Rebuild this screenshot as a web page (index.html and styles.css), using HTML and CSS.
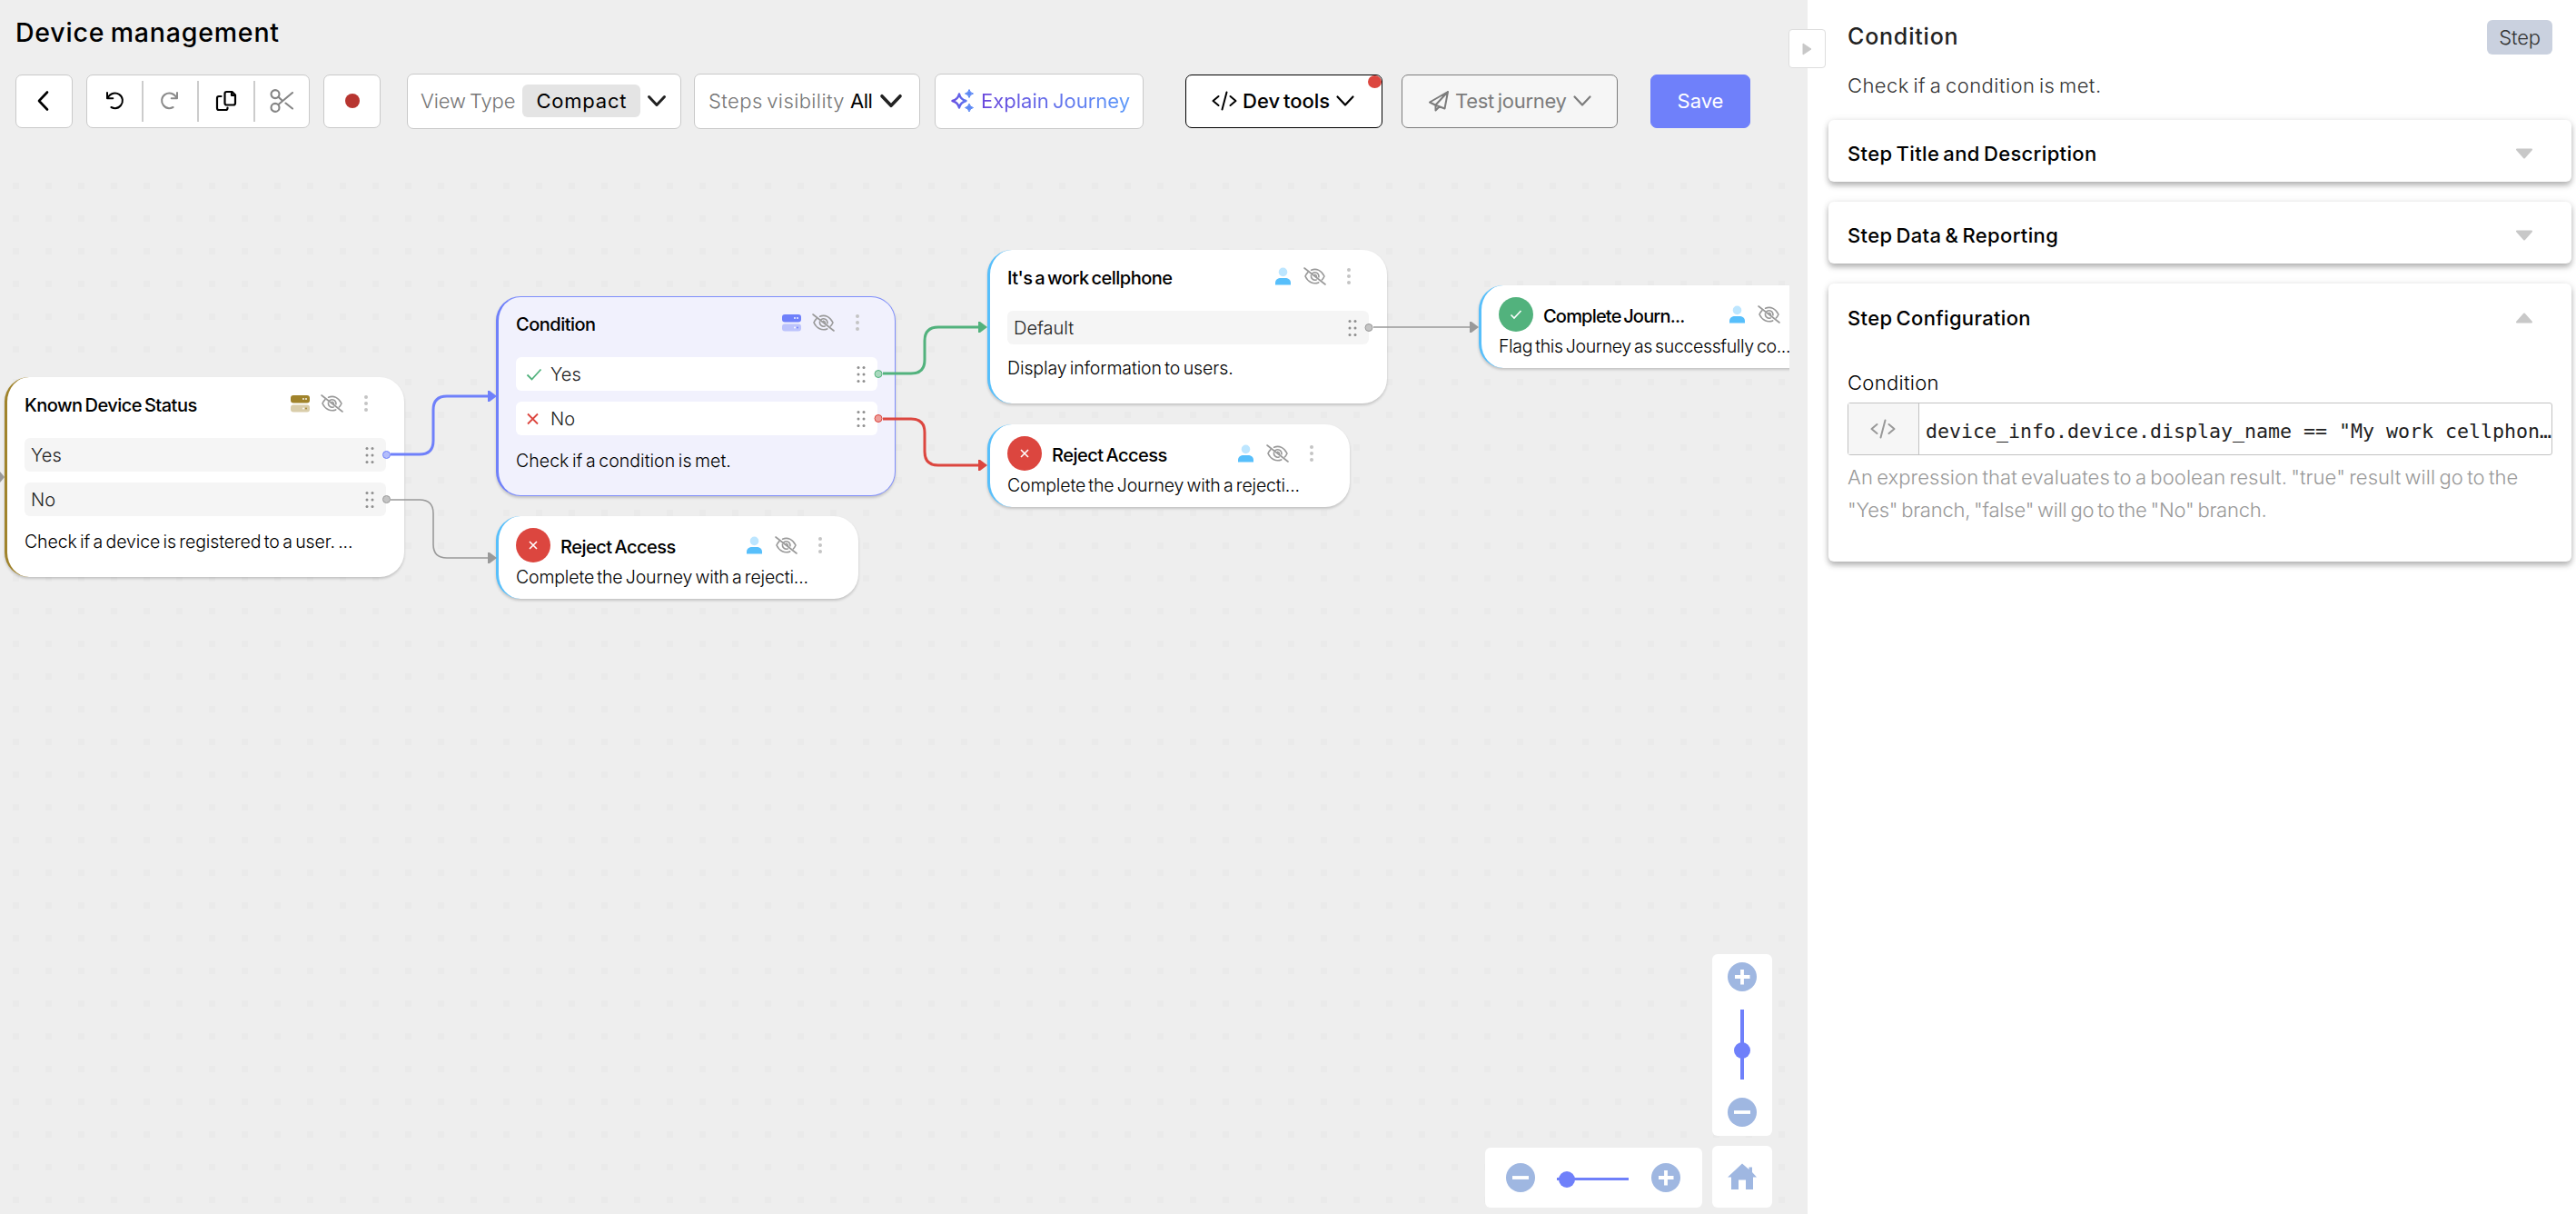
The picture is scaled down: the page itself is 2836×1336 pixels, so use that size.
FILE: index.html
```
<!DOCTYPE html>
<html lang="en">
<head>
    <meta charset="utf-8">
    <title>Device management</title>
    <link rel="stylesheet" href="styles.css">
</head>
<body>
    <!-- icon sprite -->
    <svg class="sprite">
        <symbol id="i-server" viewBox="0 0 21 20">
            <rect y="1" width="21" height="8.500" rx="3" fill="currentColor"/>
            <rect y="11.500" width="21" height="8" rx="3" fill="currentColor" opacity=".4"/>
            <circle cx="14" cy="5" r=".9" fill="#fff"/><circle cx="17" cy="5" r=".9" fill="#fff"/>
            <circle cx="14" cy="15.500" r=".9" fill="#fff"/><circle cx="17" cy="15.500" r=".9" fill="currentColor"/>
        </symbol>
        <symbol id="i-person" viewBox="0 0 21 20">
            <circle cx="10.5" cy="5.4" r="4.8" fill="#bde6ff"/>
            <path d="M2 19.5V17.5C2 13.5 5 12 8 12H13C16 12 19 13.5 19 17.5V19.5Z" fill="#57bffb"/>
        </symbol>
        <symbol id="i-eye" viewBox="0 0 25 20">
            <g fill="none" stroke="#999" stroke-width="1.6" stroke-linecap="round">
                <path d="M1 1L24 19"/>
                <path d="M8.6 3.2C14.5 .8 20 3.8 23 10C22.3 11.6 21.4 12.9 20.3 14M5 5.7C3.6 7 2.6 8.5 2 10C5 16.5 11 19.3 16.7 16.9"/>
                <path d="M10 6.6C13.4 4.3 17.4 7 16.9 10.9M8.4 9C8 12.6 11 15 14.1 13.9"/>
                <path d="M12.6 8.2C14 8.6 14.6 9.4 14.5 10.4"/>
            </g>
        </symbol>
        <symbol id="i-dots" viewBox="0 0 4 20">
            <g fill="#c4c4c4"><circle cx="2" cy="3" r="2"/><circle cx="2" cy="10" r="2"/><circle cx="2" cy="17" r="2"/></g>
        </symbol>
        <symbol id="i-drag" viewBox="0 0 10 20">
            <g fill="#8f8f8f"><circle cx="2" cy="2.6" r="1.5"/><circle cx="8" cy="2.6" r="1.5"/><circle cx="2" cy="10" r="1.5"/><circle cx="8" cy="10" r="1.5"/><circle cx="2" cy="17.4" r="1.5"/><circle cx="8" cy="17.4" r="1.5"/></g>
        </symbol>
        <symbol id="i-chevron" viewBox="0 0 22 22">
            <path d="M2.5 6.5L11 15.5L19.5 6.5" fill="none" stroke="currentColor" stroke-linecap="round" stroke-linejoin="round"/>
        </symbol>
        <symbol id="i-code" viewBox="0 0 28 22">
            <path d="M7.5 6L1.5 11L7.5 16M20.5 6L26.5 11L20.5 16M16.500 1.500L11.500 20.500" fill="none" stroke="currentColor" stroke-width="2" stroke-linecap="round" stroke-linejoin="round"/>
        </symbol>
        <symbol id="i-plus" viewBox="0 0 32 32">
            <circle cx="16" cy="16" r="16" fill="#9fb7e1"/>
            <path d="M8 16H24.5M16 8V24.5" stroke="#fff" stroke-width="3.8"/>
        </symbol>
        <symbol id="i-minus" viewBox="0 0 32 32">
            <circle cx="16" cy="16" r="16" fill="#9fb7e1"/>
            <path d="M7 16H25" stroke="#fff" stroke-width="3.8"/>
        </symbol>
    </svg>

    <div class="app">
        <main class="editor">
            <header class="header">
                <h1 class="page-title">Device management</h1>
                <div class="toolbar">
                    <button class="btn btn-icon btn-back">
                        <svg width="24" height="24" viewBox="0 0 24 24"><path d="M16 2.5L7 12L16 21.5" fill="none" stroke="#000" stroke-width="2.6" stroke-linecap="round" stroke-linejoin="round"/></svg>
                    </button>
                    <div class="btn btn-group">
                        <span class="tool">
                            <svg width="24" height="24" viewBox="0 0 24 24" fill="none" stroke="#000" stroke-width="2" stroke-linecap="round" stroke-linejoin="round"><path d="M4 3V9.300H10.300M4.300 9C7.500 2.800 13.600 2.400 17.200 4.800C21.500 7.700 22 13.500 19 17C16.300 20.200 12 20.800 8.400 19"/></svg>
                        </span>
                        <span class="tool">
                            <svg width="24" height="24" viewBox="0 0 24 24" fill="none" stroke="#8a8a8a" stroke-width="2" stroke-linecap="round" stroke-linejoin="round"><path d="M20 3V9.300H13.700M19.700 9C16.500 2.800 10.400 2.400 6.800 4.800C2.500 7.700 2 13.500 5 17C7.700 20.200 12 20.800 15.600 19"/></svg>
                        </span>
                        <span class="tool">
                            <svg width="24" height="24" viewBox="0 0 24 24" fill="none" stroke="#000" stroke-width="2.2" stroke-linecap="round" stroke-linejoin="round"><path d="M12.500 2H18.500L22 5.500V14.500Q22 16.500 20 16.500H12.500Q10.500 16.500 10.500 14.500V4Q10.500 2 12.500 2ZM18 2V6H22M6.500 7H4Q2 7 2 9V20Q2 22 4 22H11.500Q13.500 22 13.500 20V19.500"/></svg>
                        </span>
                        <span class="tool">
                            <svg width="26" height="26" viewBox="0 0 26 26" fill="none" stroke="#858585" stroke-width="2.1" stroke-linecap="round"><circle cx="6" cy="5.6" r="4.5"/><circle cx="6" cy="20.400" r="4.5"/><path d="M9.500 8.800L13 12M9.500 17L25 4M17.500 15.500L25 21.500"/></svg>
                        </span>
                    </div>
                    <button class="btn btn-icon"><i class="record-dot"></i></button>
                    <div class="btn btn-select view-type">
                        <span class="select-label">View Type</span>
                        <span class="pill">Compact</span>
                        <svg class="chev chev-bold" width="22" height="22"><use href="#i-chevron"/></svg>
                    </div>
                    <div class="btn btn-select steps">
                        <span class="select-label">Steps visibility</span>
                        <span class="select-value">All</span>
                        <svg class="chev chev-bold" width="26" height="26"><use href="#i-chevron"/></svg>
                    </div>
                    <button class="btn explain">
                        <svg width="26" height="26" viewBox="0 0 26 26">
                            <defs><linearGradient id="spark" x1="0" x2="1"><stop offset="0" stop-color="#6a4fe0"/><stop offset="1" stop-color="#5b75f0"/></linearGradient></defs>
                            <path d="M10 5.500Q11.500 11.500 17.500 13Q11.500 14.500 10 20.500Q8.500 14.500 2.500 13Q8.500 11.500 10 5.500Z" fill="none" stroke="url(#spark)" stroke-width="2.4" stroke-linejoin="round"/>
                            <path d="M21 .5Q21.800 4.200 25.500 5Q21.800 5.800 21 9.500Q20.200 5.800 16.500 5Q20.200 4.200 21 .5ZM21 16Q21.800 19.700 25.500 20.500Q21.800 21.300 21 25Q20.200 21.300 16.500 20.500Q20.200 19.700 21 16Z" fill="#5e8af5" stroke="#5e8af5" stroke-width="1"/>
                        </svg>
                        <span class="explain-label">Explain Journey</span>
                    </button>
                    <button class="btn dev-tools">
                        <svg width="28" height="22"><use href="#i-code"/></svg>
                        <span>Dev tools</span>
                        <svg class="chev" width="22" height="22"><use href="#i-chevron"/></svg>
                        <i class="badge"></i>
                    </button>
                    <button class="btn test-journey">
                        <svg width="24" height="24" viewBox="0 0 24 24" fill="none" stroke="currentColor" stroke-width="2" stroke-linejoin="round" stroke-linecap="round"><path d="M22 2L2 13.500L8 16.500L18.500 20.500ZM22 2L8.500 16.500V22.500L12.500 18.500"/></svg>
                        <span>Test journey</span>
                        <svg class="chev" width="22" height="22"><use href="#i-chevron"/></svg>
                    </button>
                    <button class="btn save">Save</button>
                </div>
            </header>

            <section class="canvas">
                <article class="node known">
                    <div class="node-head">
                        <h3 class="node-title">Known Device Status</h3>
                        <svg class="type" width="21" height="20"><use href="#i-server"/></svg>
                        <svg class="eye" width="25" height="20"><use href="#i-eye"/></svg>
                        <svg class="dots" width="4" height="20"><use href="#i-dots"/></svg>
                    </div>
                    <div class="outcomes">
                        <div class="outcome"><span>Yes</span><svg width="10" height="20"><use href="#i-drag"/></svg></div>
                        <div class="outcome"><span>No</span><svg width="10" height="20"><use href="#i-drag"/></svg></div>
                    </div>
                    <p class="node-text">Check if a device is registered to a user. ...</p>
                </article>

                <article class="node condition">
                    <div class="node-head">
                        <h3 class="node-title">Condition</h3>
                        <svg class="type" width="21" height="20"><use href="#i-server"/></svg>
                        <svg class="eye" width="25" height="20"><use href="#i-eye"/></svg>
                        <svg class="dots" width="4" height="20"><use href="#i-dots"/></svg>
                    </div>
                    <div class="outcomes">
                        <div class="outcome">
                            <svg class="mark" width="18" height="16" viewBox="0 0 18 16"><path d="M1.500 8.500L6.500 13.500L16.500 2.500" fill="none" stroke="#52b27d" stroke-width="1.8"/></svg>
                            <span>Yes</span><svg width="10" height="20"><use href="#i-drag"/></svg>
                        </div>
                        <div class="outcome">
                            <svg class="mark" width="18" height="16" viewBox="0 0 18 16"><path d="M2 2.500L13 13.500M13 2.500L2 13.500" fill="none" stroke="#dc463f" stroke-width="1.8"/></svg>
                            <span>No</span><svg width="10" height="20"><use href="#i-drag"/></svg>
                        </div>
                    </div>
                    <p class="node-text">Check if a condition is met.</p>
                </article>

                <article class="node compact reject-known">
                    <div class="node-head">
                        <i class="status status-bad"><svg width="12" height="12" viewBox="0 0 12 12"><path d="M2 2L10 10M10 2L2 10" stroke="#fff" stroke-width="1.6"/></svg></i>
                        <h3 class="node-title">Reject Access</h3>
                        <svg class="type" width="21" height="20"><use href="#i-person"/></svg>
                        <svg class="eye" width="25" height="20"><use href="#i-eye"/></svg>
                        <svg class="dots" width="4" height="20"><use href="#i-dots"/></svg>
                    </div>
                    <p class="node-text">Complete the Journey with a rejecti...</p>
                </article>

                <article class="node work">
                    <div class="node-head">
                        <h3 class="node-title">It's a work cellphone</h3>
                        <svg class="type" width="21" height="20"><use href="#i-person"/></svg>
                        <svg class="eye" width="25" height="20"><use href="#i-eye"/></svg>
                        <svg class="dots" width="4" height="20"><use href="#i-dots"/></svg>
                    </div>
                    <div class="outcomes">
                        <div class="outcome"><span>Default</span><svg width="10" height="20"><use href="#i-drag"/></svg></div>
                    </div>
                    <p class="node-text">Display information to users.</p>
                </article>

                <article class="node compact reject-condition">
                    <div class="node-head">
                        <i class="status status-bad"><svg width="12" height="12" viewBox="0 0 12 12"><path d="M2 2L10 10M10 2L2 10" stroke="#fff" stroke-width="1.6"/></svg></i>
                        <h3 class="node-title">Reject Access</h3>
                        <svg class="type" width="21" height="20"><use href="#i-person"/></svg>
                        <svg class="eye" width="25" height="20"><use href="#i-eye"/></svg>
                        <svg class="dots" width="4" height="20"><use href="#i-dots"/></svg>
                    </div>
                    <p class="node-text">Complete the Journey with a rejecti...</p>
                </article>

                <article class="node compact complete">
                    <div class="node-head">
                        <i class="status status-ok"><svg width="14" height="12" viewBox="0 0 14 12"><path d="M1.500 6.500L5 10L12.500 2" fill="none" stroke="#fff" stroke-width="1.6"/></svg></i>
                        <h3 class="node-title">Complete Journ...</h3>
                        <svg class="type" width="21" height="20"><use href="#i-person"/></svg>
                        <svg class="eye" width="25" height="20"><use href="#i-eye"/></svg>
                        <svg class="dots" width="4" height="20"><use href="#i-dots"/></svg>
                    </div>
                    <p class="node-text">Flag this Journey as successfully co...</p>
                </article>

                <!-- connections between steps -->
                <svg class="edges" width="1970" height="1149" viewBox="0 187 1970 1149" fill="none">
                    <path d="M0 519L5 525L0 531Z" fill="#999"/>
                    <g stroke="#999" stroke-width="1.6">
                        <path d="M430 550H462Q477 550 477 565V599Q477 614 492 614H540"/>
                        <path d="M1512 360H1620"/>
                    </g>
                    <path d="M430 500H462Q477 500 477 485V451Q477 436 492 436H540" stroke="#6f80fa" stroke-width="3"/>
                    <path d="M972 411H1003Q1018 411 1018 396V375Q1018 360 1033 360H1080" stroke="#52b27d" stroke-width="3"/>
                    <path d="M972 461H1003Q1018 461 1018 476V497Q1018 512 1033 512H1080" stroke="#dc463f" stroke-width="3"/>
                    <path d="M537 430H539L547 436L539 442H537Z" fill="#6f80fa"/>
                    <path d="M537 608H539L547 614L539 620H537Z" fill="#999"/>
                    <path d="M1077 354H1079L1087 360L1079 366H1077Z" fill="#52b27d"/>
                    <path d="M1077 506H1079L1087 512L1079 518H1077Z" fill="#dc463f"/>
                    <path d="M1618 354H1620L1628 360L1620 366H1618Z" fill="#999"/>
                    <circle cx="425.5" cy="500.5" r="4" fill="#b3bdfb" stroke="#6f80fa"/>
                    <circle cx="425.5" cy="549.5" r="4" fill="#c4c4c4" stroke="#999"/>
                    <circle cx="967" cy="411.5" r="4" fill="#a9d9be" stroke="#52b27d"/>
                    <circle cx="967" cy="460.5" r="4" fill="#ee9f9b" stroke="#dc463f"/>
                    <circle cx="1507" cy="360.5" r="4" fill="#c4c4c4" stroke="#999"/>
                </svg>

                <div class="controls">
                    <div class="panel zoom-h">
                        <svg width="32" height="32"><use href="#i-minus"/></svg>
                        <div class="slider slider-h"><i class="thumb"></i></div>
                        <svg width="32" height="32"><use href="#i-plus"/></svg>
                    </div>
                    <div class="controls-col">
                        <div class="panel zoom-v">
                            <svg width="32" height="32"><use href="#i-plus"/></svg>
                            <div class="slider slider-v"><i class="thumb"></i></div>
                            <svg width="32" height="32"><use href="#i-minus"/></svg>
                        </div>
                        <div class="panel home">
                            <svg width="32" height="30" viewBox="0 0 32 30"><path d="M16 .5L23.500 7V4.500H27V10L32 15.500H28V29H20V18.500H12V29H4V15.500H0Z" fill="#9fb7e1"/></svg>
                        </div>
                    </div>
                </div>
            </section>
        </main>

        <aside class="sidebar">
            <button class="collapse"><svg width="12" height="16" viewBox="0 0 12 16"><path d="M1 2V14L10 8Z" fill="#c8c8c8" stroke="#c8c8c8" stroke-linejoin="round"/></svg></button>
            <div class="side-head">
                <h2 class="side-title">Condition</h2>
                <span class="tag">Step</span>
            </div>
            <p class="side-text">Check if a condition is met.</p>

            <div class="card">
                <div class="card-head">Step Title and Description<svg class="caret" width="20" height="12" viewBox="0 0 20 12"><path d="M2 1.500H18L10 10.500Z"/></svg></div>
            </div>
            <div class="card">
                <div class="card-head">Step Data &amp; Reporting<svg class="caret" width="20" height="12" viewBox="0 0 20 12"><path d="M2 1.500H18L10 10.500Z"/></svg></div>
            </div>
            <div class="card card-open">
                <div class="card-head">Step Configuration<svg class="caret" width="20" height="12" viewBox="0 0 20 12"><path d="M2 10.500H18L10 1.500Z"/></svg></div>
                <div class="field">
                    <label class="field-label">Condition</label>
                    <div class="field-box">
                        <span class="field-icon"><svg width="28" height="22"><use href="#i-code"/></svg></span>
                        <span class="field-value">device_info.device.display_name == "My work cellphon…</span>
                    </div>
                    <p class="field-help">An expression that evaluates to a boolean result. "true" result will go to the<br><span class="help-branches">"Yes" branch, "false" will go to the "No" branch.</span></p>
                </div>
            </div>
        </aside>
    </div>
</body>
</html>
```
FILE: styles.css
```
* {
    box-sizing: border-box;
}
body {
    margin: 0;
    font-family: Inter, "Liberation Sans", sans-serif;
    font-size: 22px;
    word-spacing: -2px;
    color: #000;
    background: #fff;
}
h1, h2, h3, p {
    margin: 0;
    font-weight: 400;
}
svg {
    display: block;
    flex: none;
}
.sprite {
    display: none;
}
.app {
    display: flex;
    width: 2836px;
    height: 1336px;
    overflow: hidden;
}

/* header */
.editor {
    width: 1990px;
    flex: none;
    display: flex;
    flex-direction: column;
    background: #eee;
}
.header {
    height: 187px;
    padding: 17px 0 0 17px;
}
.page-title {
    font-size: 28.5px;
    line-height: 37px;
    font-weight: 500;
    letter-spacing: .8px;
}
.toolbar {
    display: flex;
    align-items: center;
    height: 61px;
    margin-top: 27px;
}
.btn {
    display: flex;
    align-items: center;
    height: 59px;
    padding: 0 0 1px;
    font: inherit;
    word-spacing: inherit;
    white-space: nowrap;
    background: #fff;
    border: 1px solid #c9c9c9;
    border-radius: 7px;
}
.btn-icon {
    width: 63px;
    justify-content: center;
}
.btn-back {
    padding-right: 2px;
}
.btn-group {
    width: 246px;
    margin: 0 15px;
}
.tool {
    flex: 1;
    height: 45px;
    display: flex;
    align-items: center;
    justify-content: center;
    border-right: 2px solid #ccc;
}
.tool:last-child {
    border-right: none;
}
.record-dot {
    width: 16px;
    height: 16px;
    border-radius: 50%;
    background: #b73530;
}
.btn-select, .explain {
    height: 61px;
}
.view-type {
    width: 302px;
    margin-left: 29px;
    padding-left: 14px;
}
.select-label {
    color: #757575;
    font-weight: 300;
    letter-spacing: -.1px;
}
.pill {
    width: 130px;
    height: 36px;
    margin: 0 7px 0 8px;
    display: flex;
    align-items: center;
    justify-content: center;
    letter-spacing: .8px;
    background: #e4e4e4;
    border-radius: 6px;
}
.chev {
    stroke-width: 2.2;
}
.chev-bold {
    stroke-width: 3;
    color: #222;
}
.steps {
    width: 249px;
    margin-left: 14px;
    padding-left: 15px;
}
.steps .select-label {
    letter-spacing: .4px;
}
.select-value {
    margin: 0 8px 0 6px;
    letter-spacing: -.5px;
}
.explain {
    width: 230px;
    margin-left: 16px;
    padding-left: 16px;
    gap: 8px;
}
.explain-label {
    background: linear-gradient(90deg, #6a47dc, #5c9afa);
    background-clip: text;
    -webkit-background-clip: text;
    color: transparent;
}
.dev-tools {
    position: relative;
    width: 217px;
    margin-left: 46px;
    padding-left: 28px;
    gap: 6px;
    border-color: #000;
    font-weight: 500;
}
.badge {
    position: absolute;
    top: 0;
    right: 0;
    width: 15px;
    height: 14px;
    border-radius: 50%;
    background: #dc463f;
}
.test-journey {
    width: 238px;
    margin-left: 21px;
    padding-left: 28px;
    gap: 6px;
    letter-spacing: -.3px;
    color: #7c7c7c;
    border-color: #7c7c7c;
    background: #f6f6f6;
}
.save {
    width: 110px;
    margin-left: 36px;
    justify-content: center;
    color: #fff;
    background: #6f80fa;
    border-color: #6f80fa;
}

/* canvas */
.canvas {
    position: relative;
    width: 1970px;
    height: 1149px;
    overflow: hidden;
    background:
        repeating-linear-gradient(90deg, #eee 0 14px, transparent 14px 21px, #eee 21px 36px),
        repeating-linear-gradient(#eee 0 14px, #eaeaea 14px 21px, #eee 21px 36px);
}
.edges {
    position: absolute;
    left: 0;
    top: 0;
}
.node {
    position: absolute;
    width: 440px;
    padding: 16px 20px 0 19px;
    background: #fff;
    border-radius: 27px;
    border-left: 3px solid #57bffb;
    box-shadow: 0 2px 3px rgba(0, 0, 0, .18);
}
.known {
    left: 5px;
    top: 228px;
    height: 220px;
    border-color: #a0832b;
}
.known .type {
    color: #a0832b;
}
.condition {
    left: 546px;
    top: 139px;
    height: 220px;
    padding: 15px 19px 0 19px;
    background: #f1f1fd;
    border: 1px solid #7f8efb;
    border-left: 3px solid #6f80fa;
}
.condition .type {
    color: #6f80fa;
}
.work {
    left: 1087px;
    top: 88px;
    height: 169px;
}
.compact {
    width: 399px;
    height: 91px;
    padding-top: 13px;
}
.reject-known {
    left: 546px;
    top: 381px;
}
.reject-condition {
    left: 1087px;
    top: 280px;
}
.complete {
    left: 1628px;
    top: 127px;
}
.node-head {
    display: flex;
    align-items: center;
    height: 26px;
}
.compact .node-head {
    height: 38px;
}
.node-title {
    flex: 1;
    padding-top: 3px;
    font-size: 20px;
    font-weight: 500;
    letter-spacing: -.5px;
    white-space: nowrap;
}
.complete .node-title {
    letter-spacing: -.8px;
}
.eye {
    margin: 0 23px 0 12px;
}
.dots {
    margin-right: 20px;
}
.status {
    width: 38px;
    height: 38px;
    margin-right: 11px;
    display: flex;
    align-items: center;
    justify-content: center;
    border-radius: 50%;
}
.status-bad {
    background: #dc463f;
}
.status-ok {
    background: #52b27d;
}
.outcomes {
    display: grid;
    gap: 12px;
    margin: 25px 0 16px;
}
.outcome {
    display: flex;
    align-items: center;
    height: 37px;
    padding: 0 13px 0 7px;
    font-size: 20px;
    font-weight: 300;
    color: #222;
    background: #f5f5f5;
    border-radius: 6px;
}
.condition .outcome {
    padding-left: 11px;
    background: #fff;
}
.outcome span {
    flex: 1;
}
.mark {
    margin-right: 9px;
}
.node-text {
    font-size: 19.5px;
    line-height: 24px;
    font-weight: 300;
    letter-spacing: -.1px;
    white-space: nowrap;
}
.work .outcomes {
    margin-bottom: 14px;
}
.condition .node-text {
    letter-spacing: .05px;
}
.compact .node-text {
    margin-top: 4px;
    letter-spacing: -.16px;
}
.complete .node-text {
    letter-spacing: -.36px;
}

/* zoom controls */
.controls {
    position: absolute;
    right: 19px;
    bottom: 7px;
    display: flex;
    align-items: flex-end;
    gap: 11px;
}
.controls-col {
    display: grid;
    gap: 11px;
}
.panel {
    display: flex;
    align-items: center;
    background: #fff;
    border-radius: 6px;
}
.zoom-h {
    width: 239px;
    height: 66px;
    padding-left: 23px;
}
.zoom-v {
    width: 66px;
    height: 200px;
    padding-top: 9px;
    flex-direction: column;
}
.home {
    width: 66px;
    height: 68px;
    justify-content: center;
}
.slider {
    display: flex;
    align-items: center;
    background: #6f80fa;
}
.slider-h {
    width: 79px;
    height: 3px;
    margin: 3px 25px 0 24px;
    padding-left: 2px;
}
.slider-v {
    width: 4px;
    height: 77px;
    margin: 20px 0;
    padding-top: 13px;
    justify-content: center;
}
.thumb {
    flex: none;
    width: 18px;
    height: 18px;
    border-radius: 50%;
    background: #6f80fa;
}

/* sidebar */
.sidebar {
    position: relative;
    width: 846px;
    padding: 22px 5px 0 23px;
    background: #fff;
}
.collapse {
    position: absolute;
    left: -21px;
    top: 32px;
    width: 41px;
    height: 43px;
    padding: 0;
    display: flex;
    align-items: center;
    justify-content: center;
    background: #fff;
    border: 1px solid #ddd;
    border-radius: 4px;
}
.side-head {
    display: flex;
    align-items: center;
    justify-content: space-between;
    height: 38px;
    padding: 0 21px 0 21px;
}
.side-title {
    padding-bottom: 3px;
    font-size: 25px;
    font-weight: 500;
    letter-spacing: .8px;
    color: #222;
}
.tag {
    width: 72px;
    height: 38px;
    line-height: 38px;
    text-align: center;
    font-weight: 300;
    letter-spacing: -.2px;
    color: #333;
    background: #cad1df;
    border-radius: 6px;
}
.side-text {
    padding: 18px 0 0 21px;
    line-height: 32px;
    font-weight: 300;
    letter-spacing: .45px;
    color: #333;
}
.card {
    height: 68px;
    margin-bottom: 22px;
    padding: 0 21px;
    background: #fff;
    border-radius: 6px;
    box-shadow: 0 4px 6px rgba(0, 0, 0, .28), 0 0 8px rgba(0, 0, 0, .08);
}
.side-text + .card {
    margin-top: 22px;
}
.card-open {
    height: 306px;
}
.card-head {
    display: flex;
    align-items: center;
    justify-content: space-between;
    height: 68px;
    padding: 6px 21px 0 0;
    font-weight: 500;
    letter-spacing: .34px;
}
.card-open .card-head {
    height: 70px;
}
.caret {
    fill: #c8c8c8;
    stroke: #c8c8c8;
    stroke-width: 2;
    stroke-linejoin: round;
}
.field-label {
    display: block;
    padding-top: 22px;
    line-height: 34px;
    font-weight: 300;
    letter-spacing: .3px;
}
.field-box {
    display: flex;
    align-items: center;
    width: 776px;
    height: 58px;
    margin-top: 5px;
    border: 1px solid #c2c2c2;
    border-radius: 3px;
}
.field-icon {
    width: 78px;
    height: 56px;
    display: flex;
    align-items: center;
    justify-content: center;
    color: #999;
    background: #f6f6f6;
    border-right: 1px solid #c2c2c2;
}
.field-value {
    padding: 5px 0 0 7px;
    font-family: "DejaVu Sans Mono", monospace;
    font-size: 21.6px;
    word-spacing: 0;
    color: #222;
    white-space: nowrap;
}
.field-help {
    padding-top: 6px;
    line-height: 36px;
    font-weight: 300;
    letter-spacing: .07px;
    color: #999;
    white-space: nowrap;
}
.help-branches {
    letter-spacing: -.24px;
}
```
